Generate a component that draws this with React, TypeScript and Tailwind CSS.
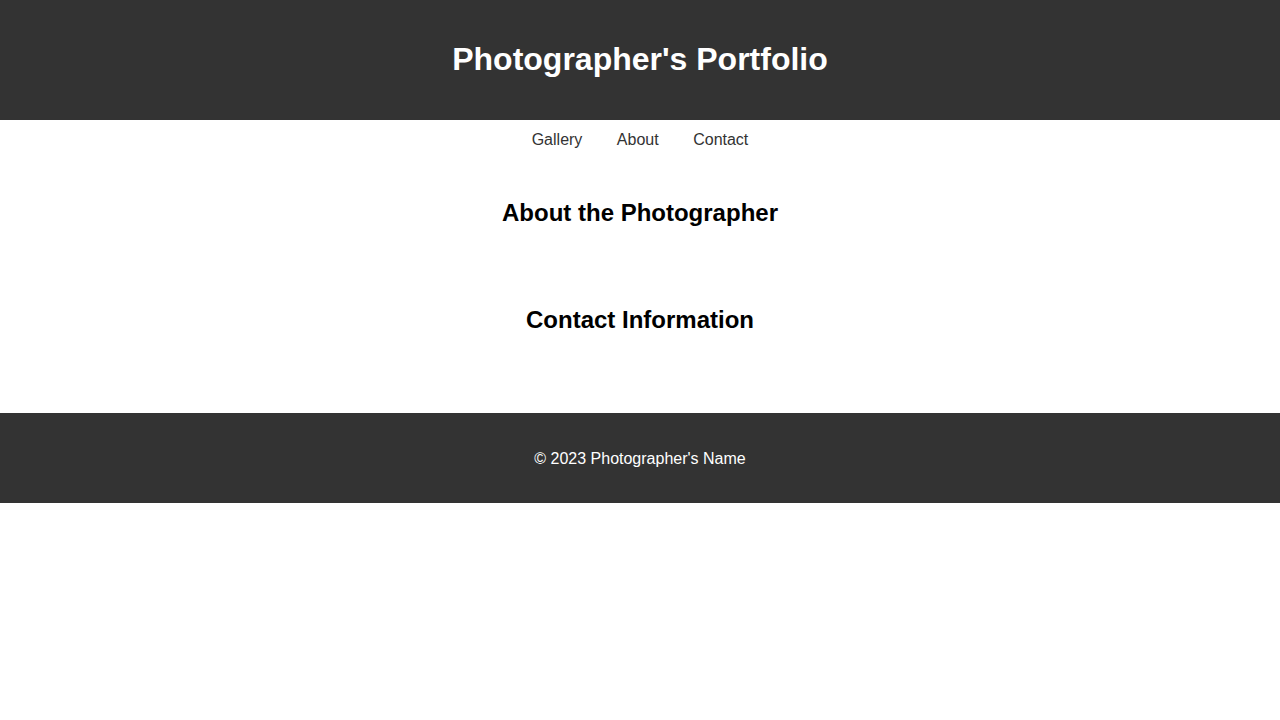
export default function App() {
  return (
    <div className="min-h-screen bg-white font-['Liberation_Sans',Arial,sans-serif]">
      <header className="bg-[#333333] pt-[41px] pb-[42px] text-center">
        <h1 className="text-[32px] font-bold leading-[37px] text-white">
          Photographer's Portfolio
        </h1>
      </header>

      <nav className="pt-[11px] pb-[9px]">
        <ul className="flex justify-center gap-[34.5px] text-[16px] leading-[18px] text-[#333333]">
          <li>
            <a href="#gallery">Gallery</a>
          </li>
          <li>
            <a href="#about">About</a>
          </li>
          <li>
            <a href="#contact">Contact</a>
          </li>
        </ul>
      </nav>

      <main className="pb-[39px]">
        <section id="about" className="pt-[41px] pb-[39px] text-center">
          <h2 className="text-[24px] font-bold leading-[28px] text-black">About the Photographer</h2>
        </section>
        <section id="contact" className="py-10 text-center">
          <h2 className="text-[24px] font-bold leading-[28px] text-black">Contact Information</h2>
        </section>
      </main>

      <footer className="bg-[#333333] pt-[37px] pb-[35px] text-center">
        <p className="text-[16px] leading-[18px] text-white">© 2023 Photographer's Name</p>
      </footer>
    </div>
  );
}
